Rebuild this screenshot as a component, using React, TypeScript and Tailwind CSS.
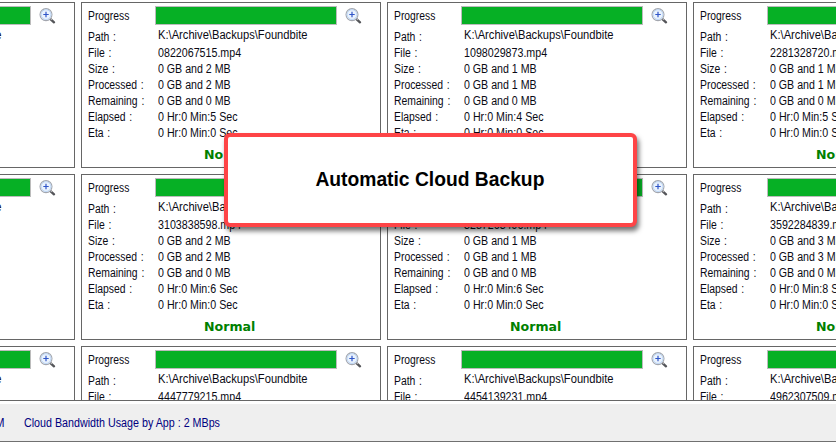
import React from "react";

type Job = { file: string; mb: number; sec: number };

const rows: Job[][] = [
  [
    { file: "0713328461.mp4", mb: 1, sec: 4 },
    { file: "0822067515.mp4", mb: 2, sec: 5 },
    { file: "1098029873.mp4", mb: 1, sec: 4 },
    { file: "2281328720.mp4", mb: 1, sec: 5 },
  ],
  [
    { file: "2890116342.mp4", mb: 1, sec: 5 },
    { file: "3103838598.mp4", mb: 2, sec: 6 },
    { file: "3287263496.mp4", mb: 1, sec: 6 },
    { file: "3592284839.mp4", mb: 3, sec: 8 },
  ],
  [
    { file: "4310092257.mp4", mb: 1, sec: 4 },
    { file: "4447779215.mp4", mb: 2, sec: 5 },
    { file: "4454139231.mp4", mb: 1, sec: 5 },
    { file: "4962307509.mp4", mb: 1, sec: 5 },
  ],
];

function Magnifier() {
  return (
    <svg width="17" height="16" viewBox="0 0 17 16" className="ml-[7.5px] mt-[5px] shrink-0">
      <path d="M11.2 10.8 15 14.3" stroke="#55565a" strokeWidth="2.4" strokeLinecap="round" />
      <path d="M10.8 10 13 12" stroke="#b9babd" strokeWidth="1" />
      <circle cx="7" cy="6.6" r="6" fill="#eaf3fd" stroke="#a3a6ae" strokeWidth="1.1" />
      <circle cx="7" cy="6.6" r="4.9" fill="none" stroke="#bdd6f5" strokeWidth="1" />
      <path d="M7 3.8v5.4M4.3 6.5h5.4" stroke="#2f55c8" strokeWidth="1.2" />
    </svg>
  );
}

function Line({ label, value, scale, up }: { label: string; value: string; scale: string; up?: boolean }) {
  return (
    <div className="flex h-4">
      <div className="w-[70px] shrink-0">
        <span className="inline-block origin-left scale-x-[0.865] [word-spacing:1px]">{label} :</span>
      </div>
      <span className={`inline-block origin-left ${scale} ${up ? "-mt-0.5" : ""}`}>{value}</span>
    </div>
  );
}

function Panel({ job }: { job: Job }) {
  return (
    <div className="h-[166px] w-[300px] shrink-0 border border-[#666] bg-white pl-1.5">
      <div className="flex h-[25px]">
        <div className="w-[67px] shrink-0 pt-[5px]">
          <span className="inline-block origin-left scale-x-[0.86]">Progress</span>
        </div>
        <div className="mt-[3px] h-[19px] w-[182px] shrink-0 border border-[#bcbcbc] bg-[#06b025]" />
        <Magnifier />
      </div>
      <div className="pt-px">
        <Line label="Path" value={"K:\\Archive\\Backups\\Foundbite"} scale="scale-x-[0.93]" up />
        <Line label="File" value={job.file} scale="scale-x-[0.89]" />
        <Line label="Size" value={`0 GB and ${job.mb} MB`} scale="scale-x-[0.885]" />
        <Line label="Processed" value={`0 GB and ${job.mb} MB`} scale="scale-x-[0.885]" />
        <Line label="Remaining" value="0 GB and 0 MB" scale="scale-x-[0.885]" />
        <Line label="Elapsed" value={`0 Hr:0 Min:${job.sec} Sec`} scale="scale-x-[0.89]" />
        <Line label="Eta" value="0 Hr:0 Min:0 Sec" scale="scale-x-[0.89]" />
      </div>
      <div className="pl-[116px] pt-1.5 font-['DejaVu_Sans',sans-serif] text-[13px] font-bold leading-4 text-[#008000]">
        <span className="inline-block origin-left scale-x-[0.97]">Normal</span>
      </div>
    </div>
  );
}

export default function App() {
  return (
    <div className="relative flex h-[442px] w-[836px] flex-col overflow-hidden whitespace-pre bg-white font-['Liberation_Sans',Arial,sans-serif] text-xs leading-4 text-[#0a0a14]">
      <div className="h-[401px] shrink-0 overflow-hidden border-b border-[#666] pt-0.5">
        <div className="-ml-[225px] flex flex-col gap-1.5">
          {rows.map((row, i) => (
            <div key={i} className="flex gap-1.5">
              {row.map((job) => (
                <Panel key={job.file} job={job} />
              ))}
            </div>
          ))}
        </div>
      </div>
      <div className="mt-[3px] flex h-[38px] items-start border-b border-[#707070] bg-[#efefef] pt-[11px] text-[#000080]">
        <div className="flex w-6 shrink-0">
          <span className="-ml-[5px] inline-block origin-left scale-x-[0.95]">M</span>
        </div>
        <span className="inline-block origin-left scale-x-[0.893]">Cloud Bandwidth Usage by App : 2 MBps</span>
      </div>
      <div className="absolute left-[224px] top-[133px] flex h-[94px] w-[413px] items-center justify-center rounded-md border-4 border-[#fe4446] bg-white pb-0.5 text-xl leading-6 font-bold text-black shadow-[2px_4px_5px_rgba(0,0,0,0.55)]">
        <span className="-ml-0.5 inline-block scale-x-[0.963]">Automatic Cloud Backup</span>
      </div>
    </div>
  );
}
